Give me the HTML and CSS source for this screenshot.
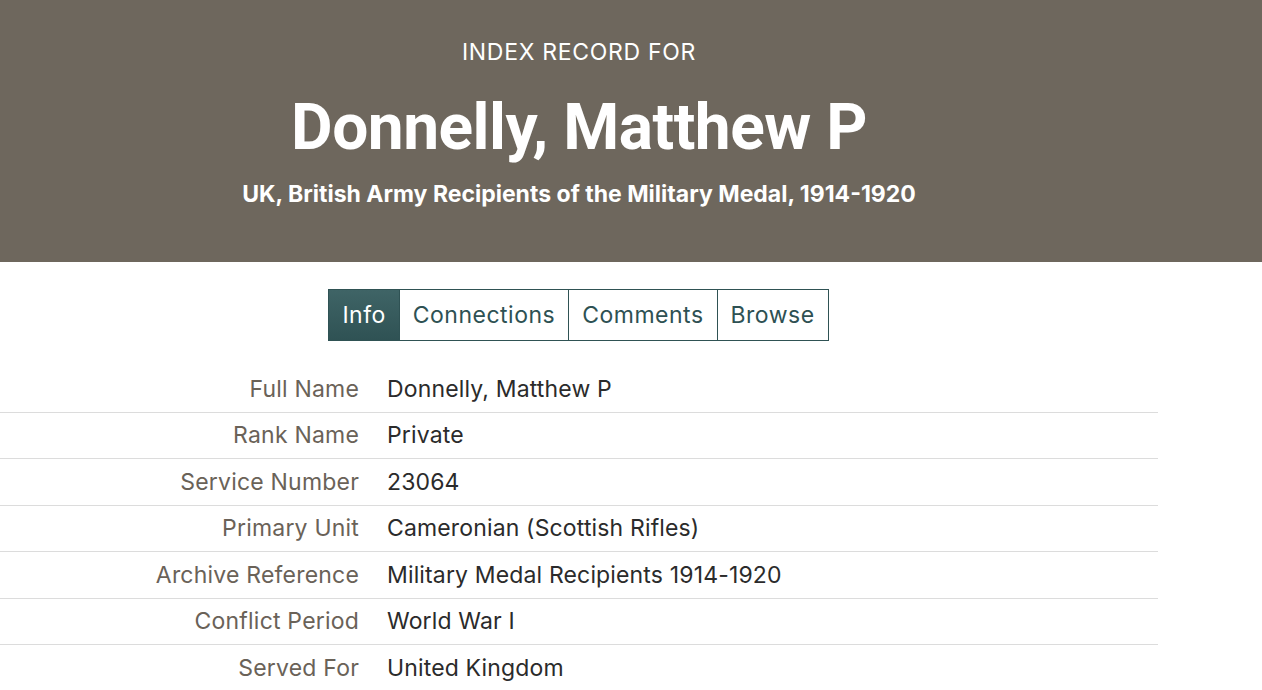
FILE: index.html
```html
<!DOCTYPE html>
<html>
<head>
<meta charset="utf-8">
<link rel="stylesheet" href="styles.css">
</head>
<body>
<div class="page">
  <header class="hero">
    <div class="kicker">INDEX RECORD FOR</div>
    <h1 class="title">Donnelly, Matthew P</h1>
    <div class="subtitle">UK, British Army Recipients of the Military Medal, 1914-1920</div>
  </header>
  <nav class="tabs">
    <a class="tab active">Info</a>
    <a class="tab">Connections</a>
    <a class="tab">Comments</a>
    <a class="tab">Browse</a>
  </nav>
  <div class="records">
    <div class="row"><div class="label">Full Name</div><div class="value">Donnelly, Matthew P</div></div>
    <div class="row"><div class="label">Rank Name</div><div class="value">Private</div></div>
    <div class="row"><div class="label">Service Number</div><div class="value">23064</div></div>
    <div class="row"><div class="label">Primary Unit</div><div class="value">Cameronian (Scottish Rifles)</div></div>
    <div class="row"><div class="label">Archive Reference</div><div class="value">Military Medal Recipients 1914-1920</div></div>
    <div class="row"><div class="label">Conflict Period</div><div class="value">World War I</div></div>
    <div class="row"><div class="label">Served For</div><div class="value">United Kingdom</div></div>
  </div>
</div>
</body>
</html>
```
FILE: styles.css
```css
* { box-sizing: border-box; }
html, body { margin: 0; padding: 0; background: #fff; }
body { font-family: Inter, Roboto, "Liberation Sans", sans-serif; overflow: hidden; }
.hero {
  background: #6e675d;
  height: 262px;
  color: #fff;
  width: 1262px;
  display: flex;
  flex-direction: column;
  align-items: center;
  padding-right: 104px;
  padding-top: 38px;
}
.kicker { font-size: 23px; line-height: 28px; letter-spacing: 0.7px; }
.title { margin: 0; margin-top: 24px; font-family: Roboto, "Liberation Sans", sans-serif; font-size: 64px; line-height: 76px; font-weight: 700; letter-spacing: -0.5px; }
.subtitle { margin-top: 13px; font-size: 23px; line-height: 30px; font-weight: 700; letter-spacing: 0; }
.tabs {
  width: 1158px;
  display: flex;
  justify-content: center;
  margin-top: 27px;
}
.tab {
  display: block;
  height: 52px;
  line-height: 50px;
  padding: 0 13px;
  border: 1px solid #2f5254;
  margin-left: -1px;
  font-size: 23px;
  letter-spacing: 0.5px;
  color: #2e5153;
  background: #fff;
}
.tab.active { background: linear-gradient(#3f6466, #2f5254); color: #fff; }
.records { width: 1158px; margin-top: 25px; }
.row {
  display: flex;
  height: 46.5px;
  align-items: center;
  border-bottom: 1px solid #dcdcdc;
}
.row:last-child { border-bottom: none; }
.label { width: 359px; text-align: right; color: #6a6258; font-size: 23px; letter-spacing: 0.2px; }
.value { margin-left: 28px; color: #2b2b2b; font-size: 23px; letter-spacing: 0.15px; }
```
